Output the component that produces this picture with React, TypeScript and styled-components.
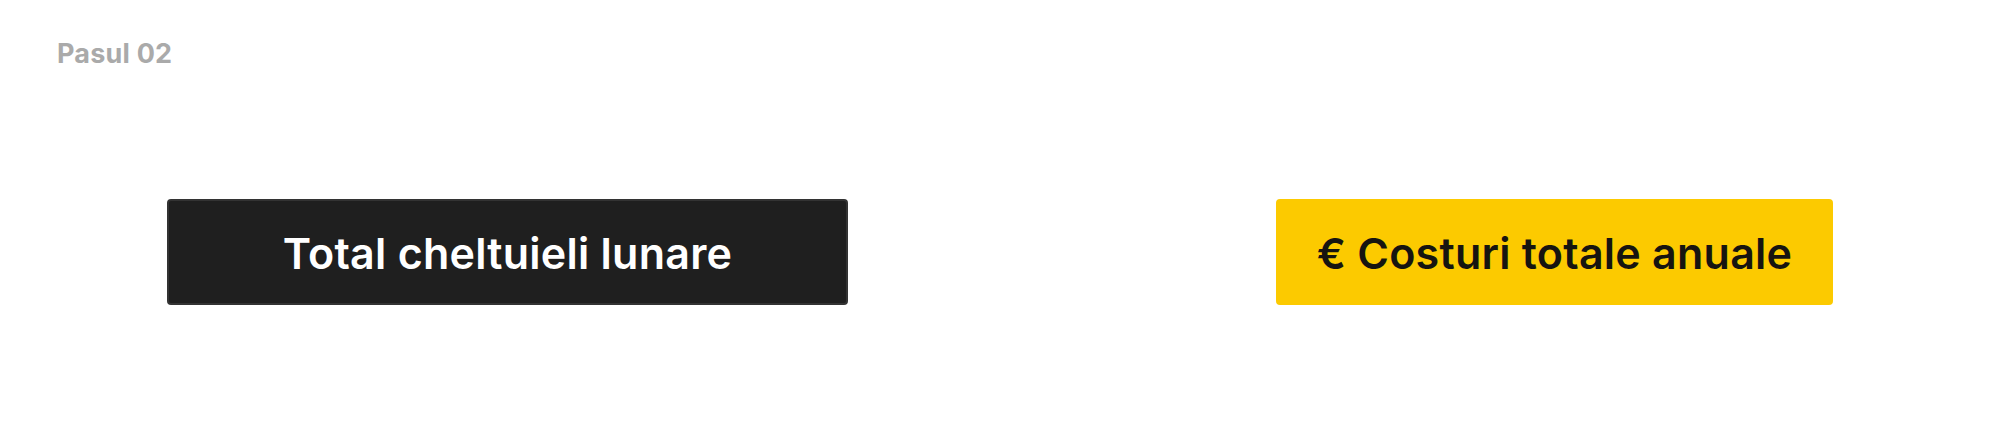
import styled, { createGlobalStyle } from "styled-components";

const GlobalStyle = createGlobalStyle`
  html, body {
    margin: 0;
    padding: 0;
    background: #ffffff;
    font-family: "Inter", "Liberation Sans", sans-serif;
  }
`;

const Page = styled.div`
  width: 2000px;
  height: 424px;
  box-sizing: border-box;
  padding: 39px 0 0 57px;
`;

const StepLabel = styled.div`
  font-size: 27px;
  line-height: 30px;
  font-weight: 700;
  color: #aaaaaa;
  letter-spacing: 0.2px;
`;

const ButtonRow = styled.div`
  display: flex;
  align-items: center;
  margin-top: 130px;
  padding-left: 110px;
  gap: 428px;
`;

const Tile = styled.div<{ $variant: "dark" | "yellow"; $width: number }>`
  width: ${(p) => p.$width}px;
  height: 106px;
  box-sizing: border-box;
  display: flex;
  align-items: center;
  justify-content: center;
  border-radius: 4px;
  font-size: 43px;
  font-weight: 600;
  letter-spacing: 0.25px;
  padding-top: 2px;
  background: ${(p) => (p.$variant === "dark" ? "#1f1f1f" : "#fcca00")};
  color: ${(p) => (p.$variant === "dark" ? "#ffffff" : "#161410")};
  border: 2px solid ${(p) => (p.$variant === "dark" ? "#333333" : "#fcca00")};
`;

export default function App() {
  return (
    <>
      <GlobalStyle />
      <Page>
        <StepLabel>Pasul 02</StepLabel>
        <ButtonRow>
          <Tile $variant="dark" $width={681}>
            Total cheltuieli lunare
          </Tile>
          <Tile $variant="yellow" $width={557}>
            € Costuri totale anuale
          </Tile>
        </ButtonRow>
      </Page>
    </>
  );
}
